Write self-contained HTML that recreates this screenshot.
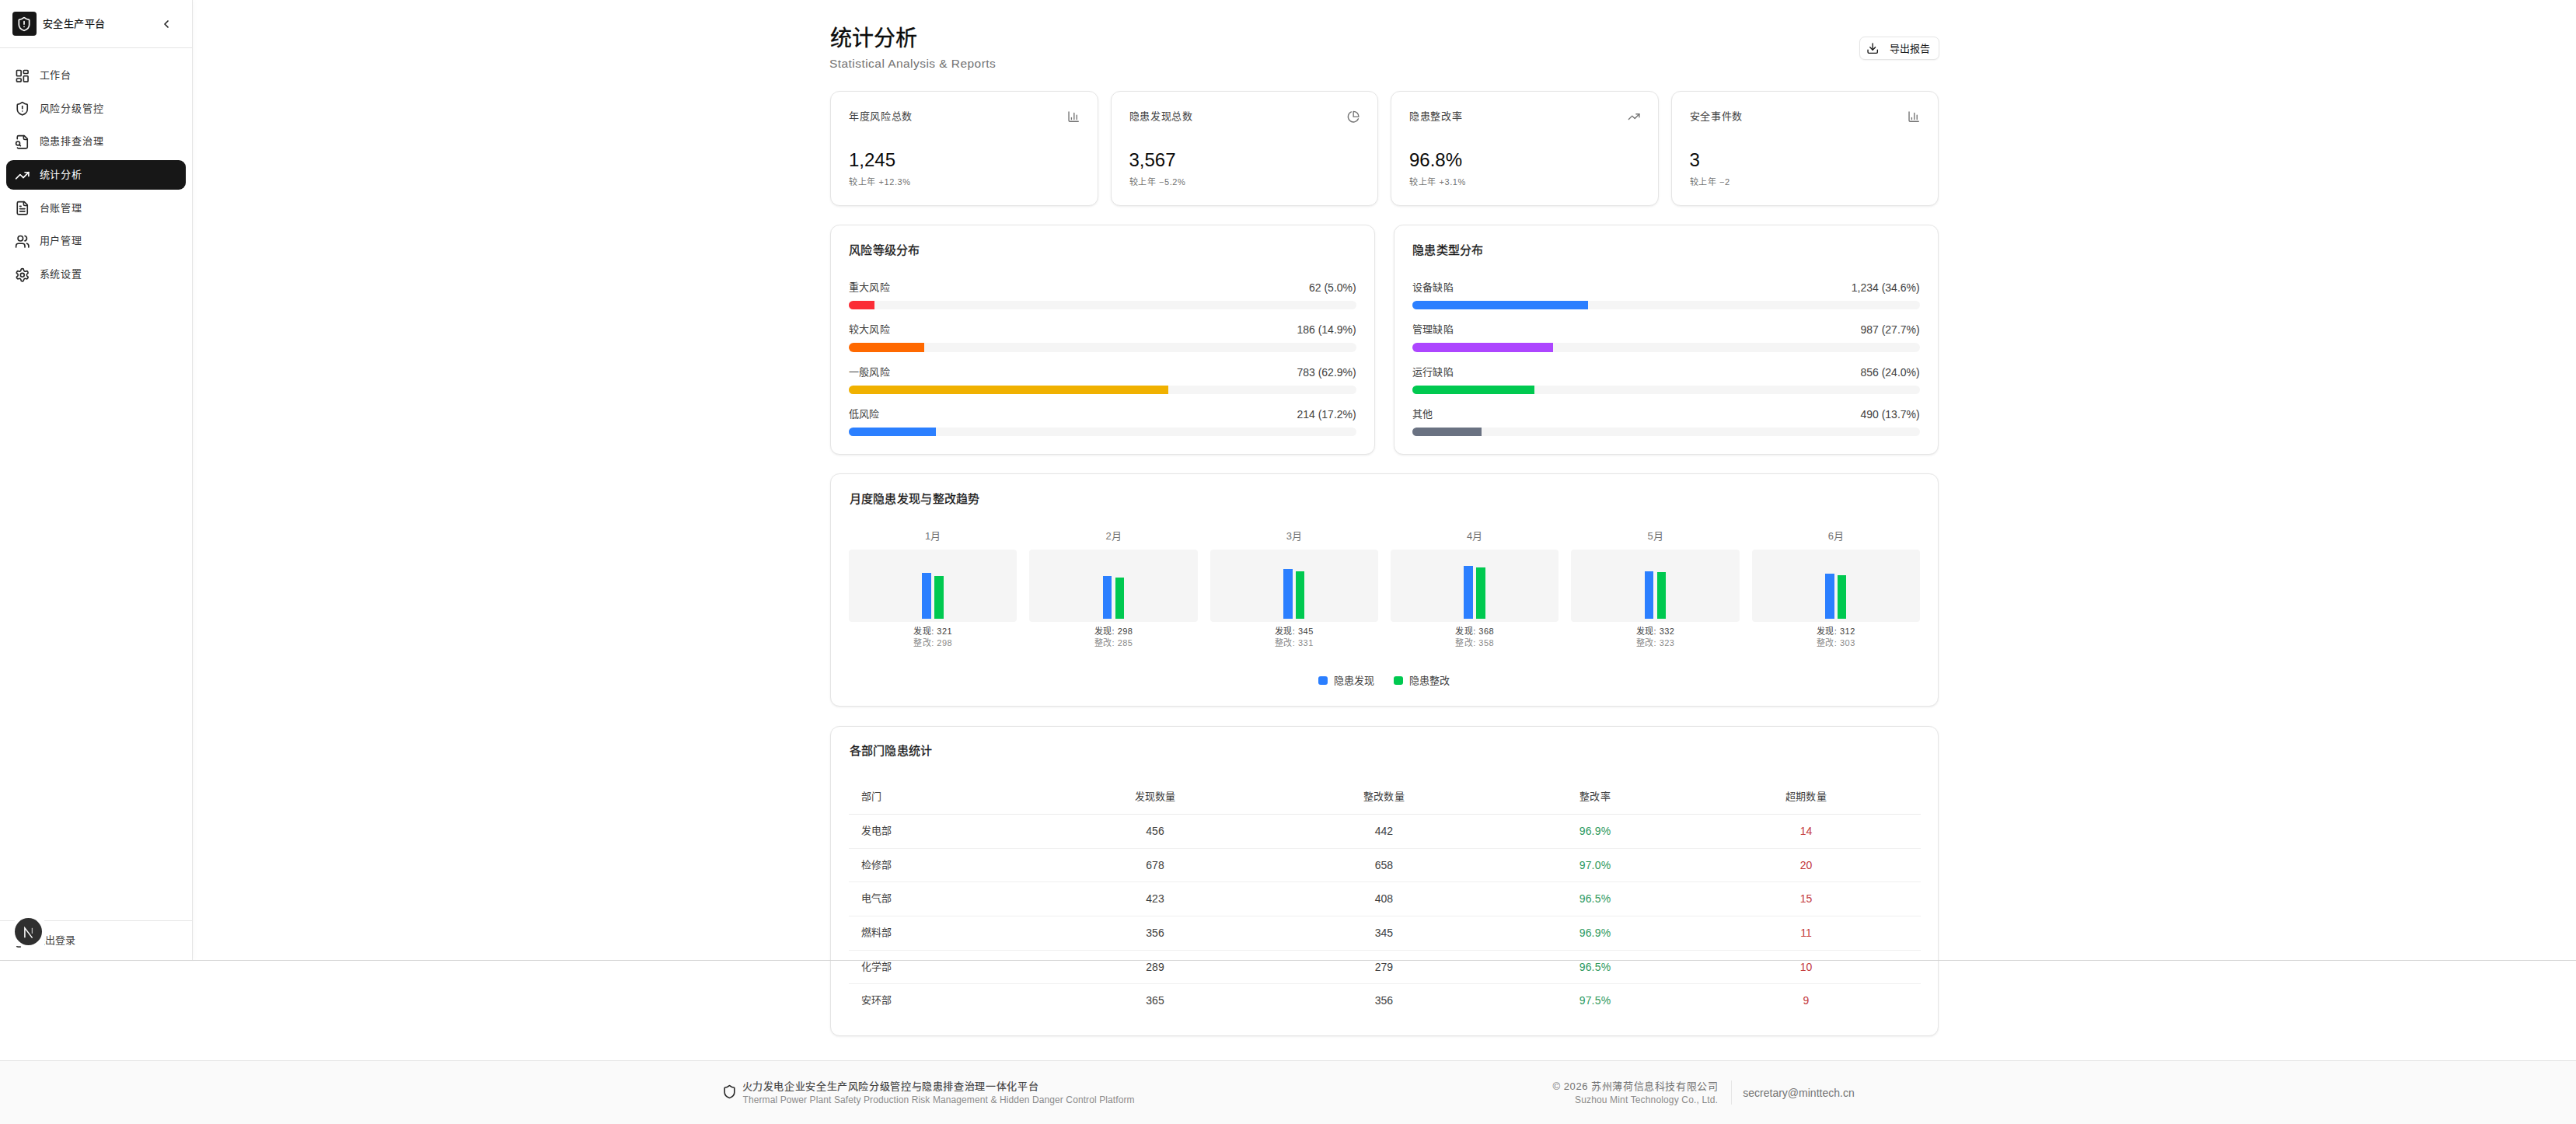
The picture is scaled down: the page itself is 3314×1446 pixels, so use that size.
<!DOCTYPE html>
<html lang="zh-CN"><head><meta charset="utf-8"><title>统计分析</title>
<style>
html,body{margin:0;padding:0;background:#fff;}
body{width:3314px;height:1446px;position:relative;overflow:hidden;font-family:"Liberation Sans", sans-serif;-webkit-font-smoothing:antialiased;}
.t{position:absolute;white-space:nowrap;}
.b{position:absolute;}
</style></head><body>
<div class="b" style="left:0.00px;top:0.00px;width:248.00px;height:1235.00px;background:#fff;border-right:1px solid #e5e5e5;box-sizing:border-box;box-shadow:2px 0 6px rgba(0,0,0,0.025);"></div>
<div class="b" style="left:0.00px;top:61.00px;width:247.00px;height:1.00px;background:#e5e5e5;"></div>
<div class="b" style="left:15.50px;top:15.40px;width:31.00px;height:31.00px;background:#171717;border-radius:4px;"></div>
<svg class="b" style="left:21.10px;top:20.90px" width="20" height="20" viewBox="0 0 24 24" fill="none" stroke="#f5f5f5" stroke-width="2.1" stroke-linecap="round" stroke-linejoin="round"><path d="M20 13c0 5-3.5 7.5-7.66 8.95a1 1 0 0 1-.67-.01C7.5 20.5 4 18 4 13V6a1 1 0 0 1 1-1c2 0 4.5-1.2 6.24-2.72a1.17 1.17 0 0 1 1.52 0C14.51 3.81 17 5 19 5a1 1 0 0 1 1 1z"/><path d="M12 8v4"/><path d="M12 16h.01"/></svg>
<div class="t" id="logo_t" style="top:19.20px;font-size:13px;line-height:24px;color:#171717;font-weight:400;letter-spacing:0.5px;left:54.50px;-webkit-text-stroke:0.25px #171717;">安全生产平台</div>
<svg class="b" style="left:206.40px;top:22.80px" width="16" height="16" viewBox="0 0 24 24" fill="none" stroke="#262626" stroke-width="2.6" stroke-linecap="round" stroke-linejoin="round"><path d="m15 18-6-6 6-6"/></svg>
<svg class="b" style="left:19.30px;top:87.60px" width="19.5" height="19.5" viewBox="0 0 24 24" fill="none" stroke="#262626" stroke-width="2" stroke-linecap="round" stroke-linejoin="round"><rect width="7" height="9" x="3" y="3" rx="1"/><rect width="7" height="5" x="14" y="3" rx="1"/><rect width="7" height="9" x="14" y="12" rx="1"/><rect width="7" height="5" x="3" y="16" rx="1"/></svg>
<div class="t" id="nav0" style="top:85.00px;font-size:13px;line-height:24px;color:#333333;font-weight:400;letter-spacing:0.9px;left:50.50px;">工作台</div>
<svg class="b" style="left:19.30px;top:130.27px" width="19.5" height="19.5" viewBox="0 0 24 24" fill="none" stroke="#262626" stroke-width="2" stroke-linecap="round" stroke-linejoin="round"><path d="M20 13c0 5-3.5 7.5-7.66 8.95a1 1 0 0 1-.67-.01C7.5 20.5 4 18 4 13V6a1 1 0 0 1 1-1c2 0 4.5-1.2 6.24-2.72a1.17 1.17 0 0 1 1.52 0C14.51 3.81 17 5 19 5a1 1 0 0 1 1 1z"/><path d="M12 8v4"/><path d="M12 16h.01"/></svg>
<div class="t" id="nav1" style="top:127.67px;font-size:13px;line-height:24px;color:#333333;font-weight:400;letter-spacing:0.9px;left:50.50px;">风险分级管控</div>
<svg class="b" style="left:19.30px;top:172.94px" width="19.5" height="19.5" viewBox="0 0 24 24" fill="none" stroke="#262626" stroke-width="2" stroke-linecap="round" stroke-linejoin="round"><path d="M14 2v4a2 2 0 0 0 2 2h4"/><path d="M4.268 21a2 2 0 0 0 1.727 1H18a2 2 0 0 0 2-2V7l-5-5H6a2 2 0 0 0-2 2v3"/><path d="m9 18-1.5-1.5"/><circle cx="5" cy="14" r="3"/></svg>
<div class="t" id="nav2" style="top:170.34px;font-size:13px;line-height:24px;color:#333333;font-weight:400;letter-spacing:0.9px;left:50.50px;">隐患排查治理</div>
<div class="b" style="left:8.00px;top:205.76px;width:231.00px;height:38.50px;background:#171717;border-radius:9px;"></div>
<svg class="b" style="left:19.30px;top:215.61px" width="19.5" height="19.5" viewBox="0 0 24 24" fill="none" stroke="#fff" stroke-width="2" stroke-linecap="round" stroke-linejoin="round"><polyline points="22 7 13.5 15.5 8.5 10.5 2 17"/><polyline points="16 7 22 7 22 13"/></svg>
<div class="t" id="nav3" style="top:213.01px;font-size:13px;line-height:24px;color:#fff;font-weight:400;letter-spacing:0.9px;left:50.50px;">统计分析</div>
<svg class="b" style="left:19.30px;top:258.28px" width="19.5" height="19.5" viewBox="0 0 24 24" fill="none" stroke="#262626" stroke-width="2" stroke-linecap="round" stroke-linejoin="round"><path d="M15 2H6a2 2 0 0 0-2 2v16a2 2 0 0 0 2 2h12a2 2 0 0 0 2-2V7Z"/><path d="M14 2v4a2 2 0 0 0 2 2h4"/><path d="M10 9H8"/><path d="M16 13H8"/><path d="M16 17H8"/></svg>
<div class="t" id="nav4" style="top:255.68px;font-size:13px;line-height:24px;color:#333333;font-weight:400;letter-spacing:0.9px;left:50.50px;">台账管理</div>
<svg class="b" style="left:19.30px;top:300.95px" width="19.5" height="19.5" viewBox="0 0 24 24" fill="none" stroke="#262626" stroke-width="2" stroke-linecap="round" stroke-linejoin="round"><path d="M16 21v-2a4 4 0 0 0-4-4H6a4 4 0 0 0-4 4v2"/><circle cx="9" cy="7" r="4"/><path d="M22 21v-2a4 4 0 0 0-3-3.87"/><path d="M16 3.13a4 4 0 0 1 0 7.75"/></svg>
<div class="t" id="nav5" style="top:298.35px;font-size:13px;line-height:24px;color:#333333;font-weight:400;letter-spacing:0.9px;left:50.50px;">用户管理</div>
<svg class="b" style="left:19.30px;top:343.62px" width="19.5" height="19.5" viewBox="0 0 24 24" fill="none" stroke="#262626" stroke-width="2" stroke-linecap="round" stroke-linejoin="round"><path d="M12.22 2h-.44a2 2 0 0 0-2 2v.18a2 2 0 0 1-1 1.73l-.43.25a2 2 0 0 1-2 0l-.15-.08a2 2 0 0 0-2.73.73l-.22.38a2 2 0 0 0 .73 2.73l.15.1a2 2 0 0 1 1 1.72v.51a2 2 0 0 1-1 1.74l-.15.09a2 2 0 0 0-.73 2.73l.22.38a2 2 0 0 0 2.73.73l.15-.08a2 2 0 0 1 2 0l.43.25a2 2 0 0 1 1 1.73V20a2 2 0 0 0 2 2h.44a2 2 0 0 0 2-2v-.18a2 2 0 0 1 1-1.73l.43-.25a2 2 0 0 1 2 0l.15.08a2 2 0 0 0 2.73-.73l.22-.39a2 2 0 0 0-.73-2.73l-.15-.08a2 2 0 0 1-1-1.74v-.5a2 2 0 0 1 1-1.74l.15-.09a2 2 0 0 0 .73-2.73l-.22-.38a2 2 0 0 0-2.73-.73l-.15.08a2 2 0 0 1-2 0l-.43-.25a2 2 0 0 1-1-1.73V4a2 2 0 0 0-2-2z"/><circle cx="12" cy="12" r="3"/></svg>
<div class="t" id="nav6" style="top:341.02px;font-size:13px;line-height:24px;color:#333333;font-weight:400;letter-spacing:0.9px;left:50.50px;">系统设置</div>
<div class="b" style="left:0.00px;top:1184.00px;width:247.00px;height:1.00px;background:#e5e5e5;"></div>
<svg class="b" style="left:19.30px;top:1200.50px" width="19.5" height="19.5" viewBox="0 0 24 24" fill="none" stroke="#404040" stroke-width="2" stroke-linecap="round" stroke-linejoin="round"><path d="M9 21H5a2 2 0 0 1-2-2V5a2 2 0 0 1 2-2h4"/><polyline points="16 17 21 12 16 7"/><line x1="21" x2="9" y1="12" y2="12"/></svg>
<div class="t" id="logout" style="top:1198.30px;font-size:13px;line-height:24px;color:#404040;font-weight:400;letter-spacing:0.1px;left:45.00px;">退出登录</div>
<div class="b" style="left:18.5px;top:1180.5px;width:38px;height:36px;background:#fff;"></div>
<div class="b" style="left:19px;top:1181px;width:35.2px;height:35.2px;border-radius:50%;background:#2f2f2f;"></div>
<svg class="b" style="left:29px;top:1192px" width="16" height="16" viewBox="0 0 16 16"><path d="M2.9 14.2V1.9L12.6 14.6" stroke="#fff" stroke-width="1.5" fill="none"/><path d="M12.4 1.8V9" stroke="#bbb" stroke-width="1.3" fill="none"/></svg>
<div class="t" id="title" style="top:30.20px;font-size:28px;line-height:40px;color:#0a0a0a;font-weight:400;left:1067.50px;-webkit-text-stroke:0.35px #0a0a0a;">统计分析</div>
<div class="t" id="subtitle" style="top:69.50px;font-size:15.5px;line-height:24px;color:#737373;font-weight:400;letter-spacing:0.45px;left:1067.00px;">Statistical Analysis &amp; Reports</div>
<div class="b" style="left:2391.50px;top:47.00px;width:103.00px;height:30.00px;background:#fff;border:1px solid #e5e5e5;border-radius:7px;box-shadow:0 1px 2px rgba(0,0,0,0.05);box-sizing:border-box;"></div>
<svg class="b" style="left:2400.80px;top:54.30px" width="16.4" height="16.4" viewBox="0 0 24 24" fill="none" stroke="#171717" stroke-width="2" stroke-linecap="round" stroke-linejoin="round"><path d="M21 15v4a2 2 0 0 1-2 2H5a2 2 0 0 1-2-2v-4"/><polyline points="7 10 12 15 17 10"/><line x1="12" x2="12" y1="15" y2="3"/></svg>
<div class="t" id="export_t" style="top:50.80px;font-size:13px;line-height:24px;color:#171717;font-weight:400;letter-spacing:0.3px;left:2430.50px;">导出报告</div>
<div class="b" style="left:1068.00px;top:116.50px;width:344.50px;height:148.50px;background:#fff;border:1px solid #e5e5e5;border-radius:12px;box-shadow:0 1px 3px rgba(0,0,0,0.06),0 1px 2px -1px rgba(0,0,0,0.06);box-sizing:border-box;"></div>
<div class="t" id="card0_lab" style="top:138.10px;font-size:13px;line-height:24px;color:#404040;font-weight:400;letter-spacing:0.6px;left:1092.30px;">年度风险总数</div>
<svg class="b" style="left:1372.80px;top:142.30px" width="16.3" height="16.3" viewBox="0 0 24 24" fill="none" stroke="#737373" stroke-width="2" stroke-linecap="round" stroke-linejoin="round"><path d="M3 3v16a2 2 0 0 0 2 2h16"/><path d="M18 17V9"/><path d="M13 17V5"/><path d="M8 17v-3"/></svg>
<div class="t" id="card0_val" style="top:190.00px;font-size:24px;line-height:32px;color:#0a0a0a;font-weight:400;left:1092.00px;">1,245</div>
<div class="t" id="card0_chg" style="top:221.60px;font-size:11px;line-height:24px;color:#737373;font-weight:400;letter-spacing:0.6px;left:1092.00px;">较上年 +12.3%</div>
<div class="b" style="left:1428.50px;top:116.50px;width:344.50px;height:148.50px;background:#fff;border:1px solid #e5e5e5;border-radius:12px;box-shadow:0 1px 3px rgba(0,0,0,0.06),0 1px 2px -1px rgba(0,0,0,0.06);box-sizing:border-box;"></div>
<div class="t" id="card1_lab" style="top:138.10px;font-size:13px;line-height:24px;color:#404040;font-weight:400;letter-spacing:0.6px;left:1452.80px;">隐患发现总数</div>
<svg class="b" style="left:1733.30px;top:142.30px" width="16.3" height="16.3" viewBox="0 0 24 24" fill="none" stroke="#737373" stroke-width="2" stroke-linecap="round" stroke-linejoin="round"><path d="M21.21 15.89A10 10 0 1 1 8 2.83"/><path d="M22 12A10 10 0 0 0 12 2v10z"/></svg>
<div class="t" id="card1_val" style="top:190.00px;font-size:24px;line-height:32px;color:#0a0a0a;font-weight:400;left:1452.50px;">3,567</div>
<div class="t" id="card1_chg" style="top:221.60px;font-size:11px;line-height:24px;color:#737373;font-weight:400;letter-spacing:0.6px;left:1452.50px;">较上年 −5.2%</div>
<div class="b" style="left:1789.00px;top:116.50px;width:344.50px;height:148.50px;background:#fff;border:1px solid #e5e5e5;border-radius:12px;box-shadow:0 1px 3px rgba(0,0,0,0.06),0 1px 2px -1px rgba(0,0,0,0.06);box-sizing:border-box;"></div>
<div class="t" id="card2_lab" style="top:138.10px;font-size:13px;line-height:24px;color:#404040;font-weight:400;letter-spacing:0.6px;left:1813.30px;">隐患整改率</div>
<svg class="b" style="left:2093.80px;top:142.30px" width="16.3" height="16.3" viewBox="0 0 24 24" fill="none" stroke="#737373" stroke-width="2" stroke-linecap="round" stroke-linejoin="round"><polyline points="22 7 13.5 15.5 8.5 10.5 2 17"/><polyline points="16 7 22 7 22 13"/></svg>
<div class="t" id="card2_val" style="top:190.00px;font-size:24px;line-height:32px;color:#0a0a0a;font-weight:400;left:1813.00px;">96.8%</div>
<div class="t" id="card2_chg" style="top:221.60px;font-size:11px;line-height:24px;color:#737373;font-weight:400;letter-spacing:0.6px;left:1813.00px;">较上年 +3.1%</div>
<div class="b" style="left:2149.50px;top:116.50px;width:344.50px;height:148.50px;background:#fff;border:1px solid #e5e5e5;border-radius:12px;box-shadow:0 1px 3px rgba(0,0,0,0.06),0 1px 2px -1px rgba(0,0,0,0.06);box-sizing:border-box;"></div>
<div class="t" id="card3_lab" style="top:138.10px;font-size:13px;line-height:24px;color:#404040;font-weight:400;letter-spacing:0.6px;left:2173.80px;">安全事件数</div>
<svg class="b" style="left:2454.30px;top:142.30px" width="16.3" height="16.3" viewBox="0 0 24 24" fill="none" stroke="#737373" stroke-width="2" stroke-linecap="round" stroke-linejoin="round"><path d="M3 3v16a2 2 0 0 0 2 2h16"/><path d="M18 17V9"/><path d="M13 17V5"/><path d="M8 17v-3"/></svg>
<div class="t" id="card3_val" style="top:190.00px;font-size:24px;line-height:32px;color:#0a0a0a;font-weight:400;left:2173.50px;">3</div>
<div class="t" id="card3_chg" style="top:221.60px;font-size:11px;line-height:24px;color:#737373;font-weight:400;letter-spacing:0.6px;left:2173.50px;">较上年 −2</div>
<div class="b" style="left:1068.00px;top:289.00px;width:701.00px;height:296.00px;background:#fff;border:1px solid #e5e5e5;border-radius:12px;box-shadow:0 1px 3px rgba(0,0,0,0.06),0 1px 2px -1px rgba(0,0,0,0.06);box-sizing:border-box;"></div>
<div class="t" id="p1_title" style="top:309.50px;font-size:15px;line-height:24px;color:#171717;font-weight:400;letter-spacing:0.3px;left:1092.00px;-webkit-text-stroke:0.3px #171717;">风险等级分布</div>
<div class="t" id="p1_lab0" style="top:357.90px;font-size:13px;line-height:24px;color:#404040;font-weight:400;letter-spacing:0.2px;left:1092.00px;">重大风险</div>
<div class="t" id="p1_val0" style="top:357.90px;font-size:14px;line-height:24px;color:#404040;font-weight:400;right:1569.30px;">62 (5.0%)</div>
<div class="b" style="left:1092.00px;top:386.90px;width:653.00px;height:11.5px;background:#f5f5f5;border-radius:6px;overflow:hidden"><div style="width:5.0%;height:100%;background:#fb2c36"></div></div>
<div class="t" id="p1_lab1" style="top:412.20px;font-size:13px;line-height:24px;color:#404040;font-weight:400;letter-spacing:0.2px;left:1092.00px;">较大风险</div>
<div class="t" id="p1_val1" style="top:412.20px;font-size:14px;line-height:24px;color:#404040;font-weight:400;right:1569.30px;">186 (14.9%)</div>
<div class="b" style="left:1092.00px;top:441.20px;width:653.00px;height:11.5px;background:#f5f5f5;border-radius:6px;overflow:hidden"><div style="width:14.9%;height:100%;background:#ff6900"></div></div>
<div class="t" id="p1_lab2" style="top:466.50px;font-size:13px;line-height:24px;color:#404040;font-weight:400;letter-spacing:0.2px;left:1092.00px;">一般风险</div>
<div class="t" id="p1_val2" style="top:466.50px;font-size:14px;line-height:24px;color:#404040;font-weight:400;right:1569.30px;">783 (62.9%)</div>
<div class="b" style="left:1092.00px;top:495.50px;width:653.00px;height:11.5px;background:#f5f5f5;border-radius:6px;overflow:hidden"><div style="width:62.9%;height:100%;background:#f0b100"></div></div>
<div class="t" id="p1_lab3" style="top:520.80px;font-size:13px;line-height:24px;color:#404040;font-weight:400;letter-spacing:0.2px;left:1092.00px;">低风险</div>
<div class="t" id="p1_val3" style="top:520.80px;font-size:14px;line-height:24px;color:#404040;font-weight:400;right:1569.30px;">214 (17.2%)</div>
<div class="b" style="left:1092.00px;top:549.80px;width:653.00px;height:11.5px;background:#f5f5f5;border-radius:6px;overflow:hidden"><div style="width:17.2%;height:100%;background:#2b7fff"></div></div>
<div class="b" style="left:1793.00px;top:289.00px;width:701.00px;height:296.00px;background:#fff;border:1px solid #e5e5e5;border-radius:12px;box-shadow:0 1px 3px rgba(0,0,0,0.06),0 1px 2px -1px rgba(0,0,0,0.06);box-sizing:border-box;"></div>
<div class="t" id="p2_title" style="top:309.50px;font-size:15px;line-height:24px;color:#171717;font-weight:400;letter-spacing:0.3px;left:1817.00px;-webkit-text-stroke:0.3px #171717;">隐患类型分布</div>
<div class="t" id="p2_lab0" style="top:357.90px;font-size:13px;line-height:24px;color:#404040;font-weight:400;letter-spacing:0.2px;left:1817.00px;">设备缺陷</div>
<div class="t" id="p2_val0" style="top:357.90px;font-size:14px;line-height:24px;color:#404040;font-weight:400;right:844.30px;">1,234 (34.6%)</div>
<div class="b" style="left:1817.00px;top:386.90px;width:653.00px;height:11.5px;background:#f5f5f5;border-radius:6px;overflow:hidden"><div style="width:34.6%;height:100%;background:#2b7fff"></div></div>
<div class="t" id="p2_lab1" style="top:412.20px;font-size:13px;line-height:24px;color:#404040;font-weight:400;letter-spacing:0.2px;left:1817.00px;">管理缺陷</div>
<div class="t" id="p2_val1" style="top:412.20px;font-size:14px;line-height:24px;color:#404040;font-weight:400;right:844.30px;">987 (27.7%)</div>
<div class="b" style="left:1817.00px;top:441.20px;width:653.00px;height:11.5px;background:#f5f5f5;border-radius:6px;overflow:hidden"><div style="width:27.7%;height:100%;background:#ad46ff"></div></div>
<div class="t" id="p2_lab2" style="top:466.50px;font-size:13px;line-height:24px;color:#404040;font-weight:400;letter-spacing:0.2px;left:1817.00px;">运行缺陷</div>
<div class="t" id="p2_val2" style="top:466.50px;font-size:14px;line-height:24px;color:#404040;font-weight:400;right:844.30px;">856 (24.0%)</div>
<div class="b" style="left:1817.00px;top:495.50px;width:653.00px;height:11.5px;background:#f5f5f5;border-radius:6px;overflow:hidden"><div style="width:24.0%;height:100%;background:#00c950"></div></div>
<div class="t" id="p2_lab3" style="top:520.80px;font-size:13px;line-height:24px;color:#404040;font-weight:400;letter-spacing:0.2px;left:1817.00px;">其他</div>
<div class="t" id="p2_val3" style="top:520.80px;font-size:14px;line-height:24px;color:#404040;font-weight:400;right:844.30px;">490 (13.7%)</div>
<div class="b" style="left:1817.00px;top:549.80px;width:653.00px;height:11.5px;background:#f5f5f5;border-radius:6px;overflow:hidden"><div style="width:13.7%;height:100%;background:#6a7282"></div></div>
<div class="b" style="left:1068.00px;top:609.00px;width:1426.00px;height:300.00px;background:#fff;border:1px solid #e5e5e5;border-radius:12px;box-shadow:0 1px 3px rgba(0,0,0,0.06),0 1px 2px -1px rgba(0,0,0,0.06);box-sizing:border-box;"></div>
<div class="t" id="p3_title" style="top:629.50px;font-size:15px;line-height:24px;color:#171717;font-weight:400;letter-spacing:0.3px;left:1092.50px;-webkit-text-stroke:0.3px #171717;">月度隐患发现与整改趋势</div>
<div class="t" id="m0" style="top:678.00px;font-size:13px;line-height:24px;color:#737373;font-weight:400;left:1200.17px;transform:translateX(-50%);">1月</div>
<div class="b" style="left:1092.00px;top:707.00px;width:216.33px;height:93.00px;background:#f5f5f5;border-radius:4px;"></div>
<div class="b" style="left:1186.37px;top:736.55px;width:11.60px;height:59.45px;background:#2b7fff;"></div>
<div class="b" style="left:1202.37px;top:740.81px;width:11.20px;height:55.19px;background:#00c950;"></div>
<div class="t" id="mf0" style="top:799.80px;font-size:11px;line-height:24px;color:#404040;font-weight:400;letter-spacing:0.5px;left:1200.17px;transform:translateX(-50%);">发现: 321</div>
<div class="t" id="mz0" style="top:815.10px;font-size:11px;line-height:24px;color:#8a8a8a;font-weight:400;letter-spacing:0.5px;left:1200.17px;transform:translateX(-50%);">整改: 298</div>
<div class="t" id="m1" style="top:678.00px;font-size:13px;line-height:24px;color:#737373;font-weight:400;left:1432.50px;transform:translateX(-50%);">2月</div>
<div class="b" style="left:1324.33px;top:707.00px;width:216.33px;height:93.00px;background:#f5f5f5;border-radius:4px;"></div>
<div class="b" style="left:1418.70px;top:740.81px;width:11.60px;height:55.19px;background:#2b7fff;"></div>
<div class="b" style="left:1434.70px;top:743.22px;width:11.20px;height:52.78px;background:#00c950;"></div>
<div class="t" id="mf1" style="top:799.80px;font-size:11px;line-height:24px;color:#404040;font-weight:400;letter-spacing:0.5px;left:1432.50px;transform:translateX(-50%);">发现: 298</div>
<div class="t" id="mz1" style="top:815.10px;font-size:11px;line-height:24px;color:#8a8a8a;font-weight:400;letter-spacing:0.5px;left:1432.50px;transform:translateX(-50%);">整改: 285</div>
<div class="t" id="m2" style="top:678.00px;font-size:13px;line-height:24px;color:#737373;font-weight:400;left:1664.83px;transform:translateX(-50%);">3月</div>
<div class="b" style="left:1556.67px;top:707.00px;width:216.33px;height:93.00px;background:#f5f5f5;border-radius:4px;"></div>
<div class="b" style="left:1651.03px;top:732.11px;width:11.60px;height:63.89px;background:#2b7fff;"></div>
<div class="b" style="left:1667.03px;top:734.70px;width:11.20px;height:61.30px;background:#00c950;"></div>
<div class="t" id="mf2" style="top:799.80px;font-size:11px;line-height:24px;color:#404040;font-weight:400;letter-spacing:0.5px;left:1664.83px;transform:translateX(-50%);">发现: 345</div>
<div class="t" id="mz2" style="top:815.10px;font-size:11px;line-height:24px;color:#8a8a8a;font-weight:400;letter-spacing:0.5px;left:1664.83px;transform:translateX(-50%);">整改: 331</div>
<div class="t" id="m3" style="top:678.00px;font-size:13px;line-height:24px;color:#737373;font-weight:400;left:1897.17px;transform:translateX(-50%);">4月</div>
<div class="b" style="left:1789.00px;top:707.00px;width:216.33px;height:93.00px;background:#f5f5f5;border-radius:4px;"></div>
<div class="b" style="left:1883.37px;top:727.85px;width:11.60px;height:68.15px;background:#2b7fff;"></div>
<div class="b" style="left:1899.37px;top:729.70px;width:11.20px;height:66.30px;background:#00c950;"></div>
<div class="t" id="mf3" style="top:799.80px;font-size:11px;line-height:24px;color:#404040;font-weight:400;letter-spacing:0.5px;left:1897.17px;transform:translateX(-50%);">发现: 368</div>
<div class="t" id="mz3" style="top:815.10px;font-size:11px;line-height:24px;color:#8a8a8a;font-weight:400;letter-spacing:0.5px;left:1897.17px;transform:translateX(-50%);">整改: 358</div>
<div class="t" id="m4" style="top:678.00px;font-size:13px;line-height:24px;color:#737373;font-weight:400;left:2129.50px;transform:translateX(-50%);">5月</div>
<div class="b" style="left:2021.33px;top:707.00px;width:216.33px;height:93.00px;background:#f5f5f5;border-radius:4px;"></div>
<div class="b" style="left:2115.70px;top:734.51px;width:11.60px;height:61.49px;background:#2b7fff;"></div>
<div class="b" style="left:2131.70px;top:736.18px;width:11.20px;height:59.82px;background:#00c950;"></div>
<div class="t" id="mf4" style="top:799.80px;font-size:11px;line-height:24px;color:#404040;font-weight:400;letter-spacing:0.5px;left:2129.50px;transform:translateX(-50%);">发现: 332</div>
<div class="t" id="mz4" style="top:815.10px;font-size:11px;line-height:24px;color:#8a8a8a;font-weight:400;letter-spacing:0.5px;left:2129.50px;transform:translateX(-50%);">整改: 323</div>
<div class="t" id="m5" style="top:678.00px;font-size:13px;line-height:24px;color:#737373;font-weight:400;left:2361.83px;transform:translateX(-50%);">6月</div>
<div class="b" style="left:2253.67px;top:707.00px;width:216.33px;height:93.00px;background:#f5f5f5;border-radius:4px;"></div>
<div class="b" style="left:2348.03px;top:738.22px;width:11.60px;height:57.78px;background:#2b7fff;"></div>
<div class="b" style="left:2364.03px;top:739.88px;width:11.20px;height:56.12px;background:#00c950;"></div>
<div class="t" id="mf5" style="top:799.80px;font-size:11px;line-height:24px;color:#404040;font-weight:400;letter-spacing:0.5px;left:2361.83px;transform:translateX(-50%);">发现: 312</div>
<div class="t" id="mz5" style="top:815.10px;font-size:11px;line-height:24px;color:#8a8a8a;font-weight:400;letter-spacing:0.5px;left:2361.83px;transform:translateX(-50%);">整改: 303</div>
<div class="b" style="left:1696.30px;top:870.10px;width:11.30px;height:11.30px;background:#2b7fff;border-radius:3px;"></div>
<div class="t" id="leg1" style="top:864.00px;font-size:13px;line-height:24px;color:#404040;font-weight:400;letter-spacing:0.1px;left:1716.00px;">隐患发现</div>
<div class="b" style="left:1793.20px;top:870.10px;width:11.80px;height:11.30px;background:#00c950;border-radius:3px;"></div>
<div class="t" id="leg2" style="top:864.00px;font-size:13px;line-height:24px;color:#404040;font-weight:400;letter-spacing:0.1px;left:1812.80px;">隐患整改</div>
<div class="b" style="left:1068.00px;top:933.50px;width:1426.00px;height:399.50px;background:#fff;border:1px solid #e5e5e5;border-radius:12px;box-shadow:0 1px 3px rgba(0,0,0,0.06),0 1px 2px -1px rgba(0,0,0,0.06);box-sizing:border-box;"></div>
<div class="t" id="p4_title" style="top:953.50px;font-size:15px;line-height:24px;color:#171717;font-weight:400;letter-spacing:0.2px;left:1092.80px;-webkit-text-stroke:0.3px #171717;">各部门隐患统计</div>
<div class="t" id="th0" style="top:1013.40px;font-size:13px;line-height:24px;color:#404040;font-weight:400;letter-spacing:0.2px;left:1107.80px;">部门</div>
<div class="t" id="th1" style="top:1013.40px;font-size:13px;line-height:24px;color:#404040;font-weight:400;letter-spacing:0.2px;left:1486.00px;transform:translateX(-50%);">发现数量</div>
<div class="t" id="th2" style="top:1013.40px;font-size:13px;line-height:24px;color:#404040;font-weight:400;letter-spacing:0.2px;left:1780.40px;transform:translateX(-50%);">整改数量</div>
<div class="t" id="th3" style="top:1013.40px;font-size:13px;line-height:24px;color:#404040;font-weight:400;letter-spacing:0.2px;left:2052.00px;transform:translateX(-50%);">整改率</div>
<div class="t" id="th4" style="top:1013.40px;font-size:13px;line-height:24px;color:#404040;font-weight:400;letter-spacing:0.2px;left:2323.50px;transform:translateX(-50%);">超期数量</div>
<div class="b" style="left:1092.00px;top:1046.50px;width:1379.00px;height:1.50px;background:#ebebeb;"></div>
<div class="t" id="td0_0" style="top:1057.00px;font-size:13px;line-height:24px;color:#404040;font-weight:400;letter-spacing:0.2px;left:1107.80px;">发电部</div>
<div class="t" id="td0_1" style="top:1057.00px;font-size:14px;line-height:24px;color:#404040;font-weight:400;left:1486.00px;transform:translateX(-50%);">456</div>
<div class="t" id="td0_2" style="top:1057.00px;font-size:14px;line-height:24px;color:#404040;font-weight:400;left:1780.40px;transform:translateX(-50%);">442</div>
<div class="t" id="td0_3" style="top:1057.00px;font-size:14px;line-height:24px;color:#2f9a5e;font-weight:400;letter-spacing:0.2px;left:2052.00px;transform:translateX(-50%);">96.9%</div>
<div class="t" id="td0_4" style="top:1057.00px;font-size:14px;line-height:24px;color:#c43b3b;font-weight:400;left:2323.50px;transform:translateX(-50%);">14</div>
<div class="b" style="left:1092.00px;top:1090.60px;width:1379.00px;height:1.00px;background:#f0f0f0;"></div>
<div class="t" id="td1_0" style="top:1100.65px;font-size:13px;line-height:24px;color:#404040;font-weight:400;letter-spacing:0.2px;left:1107.80px;">检修部</div>
<div class="t" id="td1_1" style="top:1100.65px;font-size:14px;line-height:24px;color:#404040;font-weight:400;left:1486.00px;transform:translateX(-50%);">678</div>
<div class="t" id="td1_2" style="top:1100.65px;font-size:14px;line-height:24px;color:#404040;font-weight:400;left:1780.40px;transform:translateX(-50%);">658</div>
<div class="t" id="td1_3" style="top:1100.65px;font-size:14px;line-height:24px;color:#2f9a5e;font-weight:400;letter-spacing:0.2px;left:2052.00px;transform:translateX(-50%);">97.0%</div>
<div class="t" id="td1_4" style="top:1100.65px;font-size:14px;line-height:24px;color:#c43b3b;font-weight:400;left:2323.50px;transform:translateX(-50%);">20</div>
<div class="b" style="left:1092.00px;top:1134.25px;width:1379.00px;height:1.00px;background:#f0f0f0;"></div>
<div class="t" id="td2_0" style="top:1144.30px;font-size:13px;line-height:24px;color:#404040;font-weight:400;letter-spacing:0.2px;left:1107.80px;">电气部</div>
<div class="t" id="td2_1" style="top:1144.30px;font-size:14px;line-height:24px;color:#404040;font-weight:400;left:1486.00px;transform:translateX(-50%);">423</div>
<div class="t" id="td2_2" style="top:1144.30px;font-size:14px;line-height:24px;color:#404040;font-weight:400;left:1780.40px;transform:translateX(-50%);">408</div>
<div class="t" id="td2_3" style="top:1144.30px;font-size:14px;line-height:24px;color:#2f9a5e;font-weight:400;letter-spacing:0.2px;left:2052.00px;transform:translateX(-50%);">96.5%</div>
<div class="t" id="td2_4" style="top:1144.30px;font-size:14px;line-height:24px;color:#c43b3b;font-weight:400;left:2323.50px;transform:translateX(-50%);">15</div>
<div class="b" style="left:1092.00px;top:1177.90px;width:1379.00px;height:1.00px;background:#f0f0f0;"></div>
<div class="t" id="td3_0" style="top:1187.95px;font-size:13px;line-height:24px;color:#404040;font-weight:400;letter-spacing:0.2px;left:1107.80px;">燃料部</div>
<div class="t" id="td3_1" style="top:1187.95px;font-size:14px;line-height:24px;color:#404040;font-weight:400;left:1486.00px;transform:translateX(-50%);">356</div>
<div class="t" id="td3_2" style="top:1187.95px;font-size:14px;line-height:24px;color:#404040;font-weight:400;left:1780.40px;transform:translateX(-50%);">345</div>
<div class="t" id="td3_3" style="top:1187.95px;font-size:14px;line-height:24px;color:#2f9a5e;font-weight:400;letter-spacing:0.2px;left:2052.00px;transform:translateX(-50%);">96.9%</div>
<div class="t" id="td3_4" style="top:1187.95px;font-size:14px;line-height:24px;color:#c43b3b;font-weight:400;left:2323.50px;transform:translateX(-50%);">11</div>
<div class="b" style="left:1092.00px;top:1221.55px;width:1379.00px;height:1.00px;background:#f0f0f0;"></div>
<div class="t" id="td4_0" style="top:1231.60px;font-size:13px;line-height:24px;color:#404040;font-weight:400;letter-spacing:0.2px;left:1107.80px;">化学部</div>
<div class="t" id="td4_1" style="top:1231.60px;font-size:14px;line-height:24px;color:#404040;font-weight:400;left:1486.00px;transform:translateX(-50%);">289</div>
<div class="t" id="td4_2" style="top:1231.60px;font-size:14px;line-height:24px;color:#404040;font-weight:400;left:1780.40px;transform:translateX(-50%);">279</div>
<div class="t" id="td4_3" style="top:1231.60px;font-size:14px;line-height:24px;color:#2f9a5e;font-weight:400;letter-spacing:0.2px;left:2052.00px;transform:translateX(-50%);">96.5%</div>
<div class="t" id="td4_4" style="top:1231.60px;font-size:14px;line-height:24px;color:#c43b3b;font-weight:400;left:2323.50px;transform:translateX(-50%);">10</div>
<div class="b" style="left:1092.00px;top:1265.20px;width:1379.00px;height:1.00px;background:#f0f0f0;"></div>
<div class="t" id="td5_0" style="top:1275.25px;font-size:13px;line-height:24px;color:#404040;font-weight:400;letter-spacing:0.2px;left:1107.80px;">安环部</div>
<div class="t" id="td5_1" style="top:1275.25px;font-size:14px;line-height:24px;color:#404040;font-weight:400;left:1486.00px;transform:translateX(-50%);">365</div>
<div class="t" id="td5_2" style="top:1275.25px;font-size:14px;line-height:24px;color:#404040;font-weight:400;left:1780.40px;transform:translateX(-50%);">356</div>
<div class="t" id="td5_3" style="top:1275.25px;font-size:14px;line-height:24px;color:#2f9a5e;font-weight:400;letter-spacing:0.2px;left:2052.00px;transform:translateX(-50%);">97.5%</div>
<div class="t" id="td5_4" style="top:1275.25px;font-size:14px;line-height:24px;color:#c43b3b;font-weight:400;left:2323.50px;transform:translateX(-50%);">9</div>
<div class="b" style="left:0.00px;top:1364.00px;width:3314.00px;height:82.00px;background:#fafafa;border-top:1px solid #e5e5e5;box-sizing:border-box;"></div>
<svg class="b" style="left:928.50px;top:1395.20px" width="19" height="19" viewBox="0 0 24 24" fill="none" stroke="#262626" stroke-width="2" stroke-linecap="round" stroke-linejoin="round"><path d="M20 13c0 5-3.5 7.5-7.66 8.95a1 1 0 0 1-.67-.01C7.5 20.5 4 18 4 13V6a1 1 0 0 1 1-1c2 0 4.5-1.2 6.24-2.72a1.17 1.17 0 0 1 1.52 0C14.51 3.81 17 5 19 5a1 1 0 0 1 1 1z"/></svg>
<div class="t" id="f_cn" style="top:1385.90px;font-size:13px;line-height:24px;color:#404040;font-weight:400;letter-spacing:0.63px;left:954.50px;-webkit-text-stroke:0.15px #404040;">火力发电企业安全生产风险分级管控与隐患排查治理一体化平台</div>
<div class="t" id="f_en" style="top:1402.50px;font-size:12px;line-height:24px;color:#8a8a8a;font-weight:400;letter-spacing:0.1px;left:955.50px;">Thermal Power Plant Safety Production Risk Management &amp; Hidden Danger Control Platform</div>
<div class="t" id="f_co" style="top:1385.90px;font-size:13px;line-height:24px;color:#737373;font-weight:400;letter-spacing:0.6px;right:1104.10px;margin-right:-0.6px;">© 2026 苏州薄荷信息科技有限公司</div>
<div class="t" id="f_coen" style="top:1402.50px;font-size:12px;line-height:24px;color:#8a8a8a;font-weight:400;letter-spacing:0.15px;right:1104.10px;margin-right:-0.15px;">Suzhou Mint Technology Co., Ltd.</div>
<div class="b" style="left:2227.00px;top:1389.80px;width:1.00px;height:31.00px;background:#e5e5e5;"></div>
<div class="b" style="left:0.00px;top:1235.00px;width:3314.00px;height:1.00px;background:#d4d4d4;z-index:10;"></div>
<div class="t" id="f_mail" style="top:1393.50px;font-size:14px;line-height:24px;color:#737373;font-weight:400;left:2242.30px;">secretary@minttech.cn</div>
</body></html>
